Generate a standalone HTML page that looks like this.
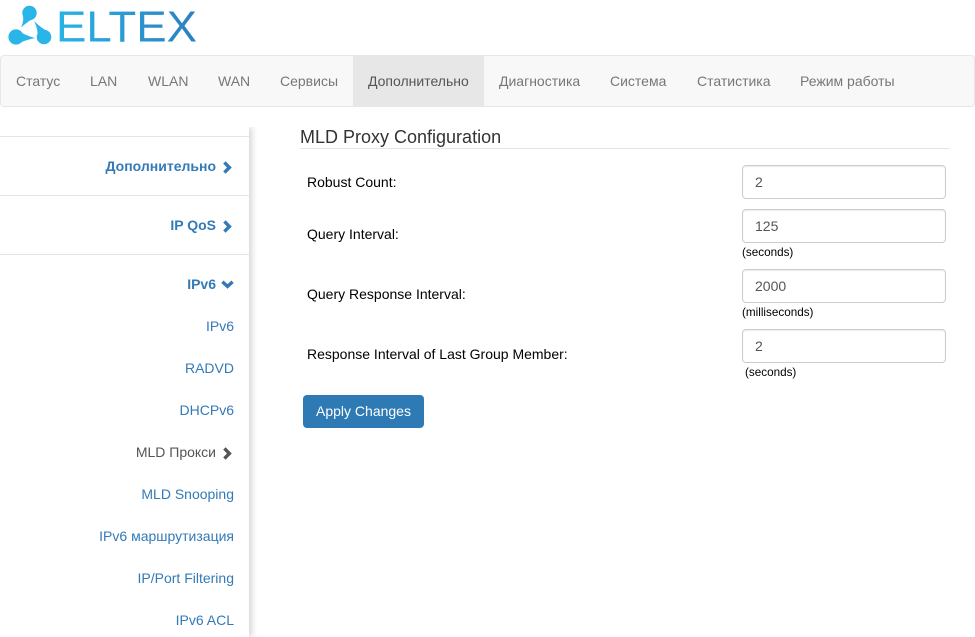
<!DOCTYPE html>
<html>
<head>
<meta charset="utf-8">
<style>
html,body{margin:0;padding:0;background:#fff;width:975px;height:637px;overflow:hidden;font-family:"Liberation Sans",sans-serif;font-size:14px;}
.a{position:absolute;white-space:nowrap;line-height:20px;}
#nav{position:absolute;left:0;top:55px;width:973px;height:50px;background:#f8f8f8;border:1px solid #e7e7e7;border-radius:4px;}
#act{position:absolute;left:353px;top:56px;width:131px;height:50px;background:#e7e7e7;}
.n{color:#777;top:71px;}
#side{position:absolute;left:0;top:127px;width:249px;height:510px;background:#fff;box-shadow:3px 0 6px rgba(0,0,0,.16);clip-path:inset(0 -12px 0 0);}
.hr{position:absolute;left:0;width:249px;height:1px;background:#e4e4e4;}
.r{right:741px;text-align:right;color:#337ab7;}
.b{font-weight:bold;}
.l{left:307px;color:#000;}
.inp{position:absolute;left:742px;width:202px;height:32px;border:1px solid #ccc;border-radius:4px;box-shadow:inset 0 1px 1px rgba(0,0,0,.075);color:#555;line-height:32px;text-indent:12px;background:#fff;}
.s{color:#000;font-size:11.7px;line-height:14px;}
svg{position:absolute;overflow:visible;}
</style>
</head>
<body>
<svg style="left:0;top:0" width="210" height="50" viewBox="0 0 210 50">
<defs>
<linearGradient id="g" x1="57" x2="197" y1="0" y2="0" gradientUnits="userSpaceOnUse">
<stop offset="0" stop-color="#27b4e6"/><stop offset="1" stop-color="#2d7fc0"/>
</linearGradient>
</defs>
<g fill="#29b5e8">
<circle cx="29.500" cy="13" r="7.200"/>
<path d="M21 27.500 Q24.500 21 22.800 10 L35.500 17 Q27 22 21 27.500Z"/>
<circle cx="16" cy="37" r="7.600"/>
<path d="M35 38 Q25 35.500 16 29.500 L16 44.500 Q25 40 35 38Z"/>
<circle cx="44" cy="37" r="7.300"/>
<path d="M34 21 Q38.500 29 37.800 41 L50.300 33 Q41 28 34 21Z"/>
</g>
<text x="56" y="41.500" font-family="Liberation Sans" font-size="44" fill="url(#g)" textLength="141" lengthAdjust="spacingAndGlyphs">ELTEX</text>
</svg>

<div id="nav"></div>
<div id="act"></div>
<div class="a n" style="left:16px">Статус</div>
<div class="a n" style="left:90px">LAN</div>
<div class="a n" style="left:148px">WLAN</div>
<div class="a n" style="left:218px">WAN</div>
<div class="a n" style="left:280px">Сервисы</div>
<div class="a n" style="left:368px;color:#555">Дополнительно</div>
<div class="a n" style="left:499px">Диагностика</div>
<div class="a n" style="left:610px">Система</div>
<div class="a n" style="left:697px">Статистика</div>
<div class="a n" style="left:800px">Режим работы</div>

<div id="side"></div>
<div class="hr" style="top:136px"></div>
<div class="hr" style="top:195px"></div>
<div class="hr" style="top:254px"></div>

<div class="a r b" style="top:156px;right:759px">Дополнительно</div>
<svg style="left:222px;top:161px" width="10" height="13" viewBox="0 0 10 13"><path d="M2.400 1.400 L7.400 6.500 L2.400 11.600" fill="none" stroke="#337ab7" stroke-width="3.400"/></svg>
<div class="a r b" style="top:215px;right:759px">IP QoS</div>
<svg style="left:222px;top:220px" width="10" height="13" viewBox="0 0 10 13"><path d="M2.400 1.400 L7.400 6.500 L2.400 11.600" fill="none" stroke="#337ab7" stroke-width="3.400"/></svg>
<div class="a r b" style="top:274px;right:759px">IPv6</div>
<svg style="left:221px;top:280px" width="13" height="10" viewBox="0 0 13 10"><path d="M1.400 1.800 L6.500 6.400 L11.600 1.800" fill="none" stroke="#337ab7" stroke-width="3.400"/></svg>

<div class="a r" style="top:316px">IPv6</div>
<div class="a r" style="top:358px">RADVD</div>
<div class="a r" style="top:400px">DHCPv6</div>
<div class="a r" style="top:442px;right:759px;color:#555">MLD Прокси</div>
<svg style="left:222px;top:447px" width="10" height="13" viewBox="0 0 10 13"><path d="M2.400 1.400 L7.400 6.500 L2.400 11.600" fill="none" stroke="#555" stroke-width="3.400"/></svg>
<div class="a r" style="top:484px">MLD Snooping</div>
<div class="a r" style="top:526px">IPv6 маршрутизация</div>
<div class="a r" style="top:568px">IP/Port Filtering</div>
<div class="a r" style="top:610px">IPv6 ACL</div>

<div class="a" style="left:300px;top:127px;font-size:18px;color:#333;">MLD Proxy Configuration</div>
<div style="position:absolute;left:300px;top:148px;width:650px;height:1px;background:#e5e5e5"></div>

<div class="a l" style="top:172px">Robust Count:</div>
<div class="a l" style="top:224px">Query Interval:</div>
<div class="a l" style="top:284px">Query Response Interval:</div>
<div class="a l" style="top:344px">Response Interval of Last Group Member:</div>

<div class="inp" style="top:165px">2</div>
<div class="inp" style="top:209px">125</div>
<div class="a s" style="left:742px;top:246px">(seconds)</div>
<div class="inp" style="top:269px">2000</div>
<div class="a s" style="left:742px;top:306px">(milliseconds)</div>
<div class="inp" style="top:329px">2</div>
<div class="a s" style="left:745px;top:366px">(seconds)</div>

<div style="position:absolute;left:303px;top:395px;width:121px;height:33px;background:#2e7ab5;border-radius:4px;color:#fff;text-align:center;line-height:32px;">Apply Changes</div>
</body>
</html>
